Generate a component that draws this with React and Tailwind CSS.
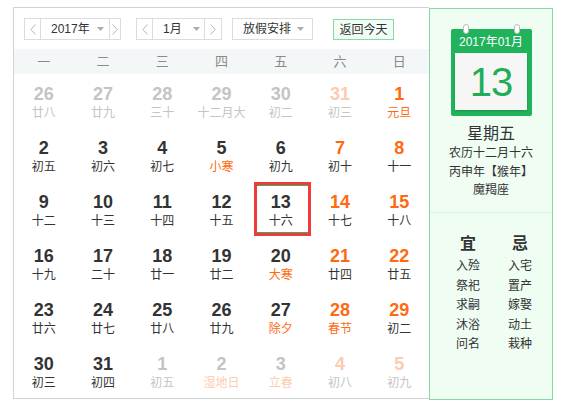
import React from "react";

const F = { fontFamily: '"Liberation Sans", "Noto Sans CJK SC", sans-serif' };

const GRAY = "text-[#c4c4c4]";
const LORANGE = "text-[#fccbb0]";
const ORANGE = "text-[#ff6a10]";
const DARK = "text-[#333333]";

// [num, lunar, numClass, lunarClass, selected]
const rows = [
  [["26","廿八",GRAY,GRAY],["27","廿九",GRAY,GRAY],["28","三十",GRAY,GRAY],["29","十二月大",GRAY,GRAY],["30","初二",GRAY,GRAY],["31","初三",LORANGE,GRAY],["1","元旦",ORANGE,ORANGE]],
  [["2","初五",DARK,DARK],["3","初六",DARK,DARK],["4","初七",DARK,DARK],["5","小寒",DARK,ORANGE],["6","初九",DARK,DARK],["7","初十",ORANGE,DARK],["8","十一",ORANGE,DARK]],
  [["9","十二",DARK,DARK],["10","十三",DARK,DARK],["11","十四",DARK,DARK],["12","十五",DARK,DARK],["13","十六",DARK,DARK,true],["14","十七",ORANGE,DARK],["15","十八",ORANGE,DARK]],
  [["16","十九",DARK,DARK],["17","二十",DARK,DARK],["18","廿一",DARK,DARK],["19","廿二",DARK,DARK],["20","大寒",DARK,ORANGE],["21","廿四",ORANGE,DARK],["22","廿五",ORANGE,DARK]],
  [["23","廿六",DARK,DARK],["24","廿七",DARK,DARK],["25","廿八",DARK,DARK],["26","廿九",DARK,DARK],["27","除夕",DARK,ORANGE],["28","春节",ORANGE,ORANGE],["29","初二",ORANGE,DARK]],
  [["30","初三",DARK,DARK],["31","初四",DARK,DARK],["1","初五",GRAY,GRAY],["2","湿地日",GRAY,LORANGE],["3","立春",GRAY,LORANGE],["4","初八",LORANGE,GRAY],["5","初九",LORANGE,GRAY]],
];

function Chevron({ dir }) {
  return (
    <svg width="6" height="11" viewBox="0 0 6 11" className="block">
      {dir === "l" ? (
        <polyline points="5.5,0.5 0.8,5.5 5.5,10.5" fill="none" stroke="#b5b5b5" strokeWidth="1" />
      ) : (
        <polyline points="0.5,0.5 5.2,5.5 0.5,10.5" fill="none" stroke="#b5b5b5" strokeWidth="1" />
      )}
    </svg>
  );
}

function Tri() {
  return (
    <svg width="7" height="4" viewBox="0 0 7 4" className="block shrink-0">
      <polygon points="0,0 7,0 3.5,4" fill="#aaaaaa" />
    </svg>
  );
}

function Picker({ label, width, rw, pad }) {
  return (
    <div className={`flex h-[22px] border border-[#dcdcdc] bg-white ${width}`}>
      <div className="w-[16px] shrink-0 flex items-center justify-center border-r border-[#dcdcdc]"><Chevron dir="l" /></div>
      <div className={`flex-1 flex items-center justify-between text-[12px] text-[#333] whitespace-nowrap ${pad}`}>
        <span>{label}</span>
        <Tri />
      </div>
      <div className={`shrink-0 flex items-center justify-center border-l border-[#dcdcdc] ${rw}`}><Chevron dir="r" /></div>
    </div>
  );
}

export default function App() {
  return (
    <div className="w-[563px] h-[408px] bg-white overflow-hidden" style={F}>
      <div className="flex ml-[13px] mt-[7px]">
        {/* left calendar */}
        <div className="w-[416px] h-[392px] border-l border-t border-b border-[#d2d2d2] flex flex-col">
          {/* toolbar */}
          <div className="h-[41px] flex items-start pt-[10px] pl-[10px]">
            <Picker label="2017年" width="w-[97px]" rw="w-[11px]" pad="pl-[10px] pr-[5px]" />
            <div className="ml-[15px]"><Picker label="1月" width="w-[86px]" rw="w-[17px]" pad="pl-[10px] pr-[4px]" /></div>
            <div className="ml-[10px] h-[22px] w-[81px] border border-[#dcdcdc] flex items-center justify-between pl-[10px] pr-[8px] text-[12px] text-[#333] whitespace-nowrap">
              <span>放假安排</span>
              <Tri />
            </div>
            <div className="ml-[20px] mt-[1px] h-[21px] w-[61px] border border-[#86dba3] bg-[#f2fdf5] flex items-center justify-center text-[12px] text-[#333] whitespace-nowrap">
              返回今天
            </div>
          </div>
          {/* weekday header */}
          <div className="h-[25px] bg-[#f3f7f7] grid grid-cols-7 items-center text-[13px] text-[#8a8a8a]">
            {["一","二","三","四","五","六","日"].map((d) => (
              <div key={d} className="text-center">{d}</div>
            ))}
          </div>
          {/* body */}
          <div className="flex-1 grid grid-cols-7 grid-rows-6">
            {rows.flat().map(([n, l, nc, lc, sel], i) => (
              <div key={i} className="relative flex flex-col items-center pt-[10px]">
                {sel && (
                  <div className="absolute left-[3px] right-[-1px] top-0 bottom-0 border-[3px] border-[#ef3b3b]">
                    <div className="absolute inset-x-0 top-0 h-[1px] bg-[#2fb35f]" />
                    <div className="absolute inset-x-0 bottom-0 h-[1px] bg-[#2fb35f]" />
                  </div>
                )}
                <div className={`relative text-[18px] leading-[20px] font-bold ${nc}`}>{n}</div>
                <div className={`relative text-[12px] leading-[18px] whitespace-nowrap ${lc}`}>{l}</div>
              </div>
            ))}
          </div>
        </div>
        {/* right panel */}
        <div className="w-[124px] h-[392px] mt-[1px] border border-[#84d9a5] bg-[#effdf3] flex flex-col">
          <div className="h-[204px] border-b border-[#d6f3df] flex flex-col items-center">
            {/* calendar icon */}
            <div className="relative mt-[20px] w-[81px] h-[87px] bg-[#20b35c] rounded-[2px] flex flex-col items-center">
              <div className="absolute left-[12px] top-[-5px] w-[6px] h-[10px] rounded-full bg-white border border-[#b8bcc0]" />
              <div className="absolute right-[12px] top-[-5px] w-[6px] h-[10px] rounded-full bg-white border border-[#b8bcc0]" />
              <div className="h-[24px] flex items-center text-[12px] text-white pt-[2px] whitespace-nowrap">2017年01月</div>
              <div className="w-[72px] h-[57px] bg-[#f6f6f6] flex items-center justify-center shadow-[0_1px_2px_rgba(0,0,0,0.2)]">
                <span className="text-[40px] leading-none text-[#1fae57] tracking-[-1px]">13</span>
              </div>
            </div>
            <div className="mt-[8px] text-[16px] leading-[20px] text-[#333]">星期五</div>
            <div className="text-[12px] leading-[19px] text-[#333] whitespace-nowrap">农历十二月十六</div>
            <div className="text-[12px] leading-[19px] text-[#333] whitespace-nowrap">丙申年【猴年】</div>
            <div className="text-[12px] leading-[16px] text-[#333]">魔羯座</div>
          </div>
          <div className="flex justify-center gap-[28px] pt-[20px] pl-[6px]">
            {[["宜", ["入殓","祭祀","求嗣","沐浴","问名"]], ["忌", ["入宅","置产","嫁娶","动土","栽种"]]].map(([h, items]) => (
              <div key={h} className="flex flex-col items-center">
                <div className="text-[16px] leading-[22px] font-bold text-[#333] mb-[2px]">{h}</div>
                {items.map((t) => (
                  <div key={t} className="text-[12px] leading-[19.5px] text-[#333]">{t}</div>
                ))}
              </div>
            ))}
          </div>
        </div>
      </div>
    </div>
  );
}
